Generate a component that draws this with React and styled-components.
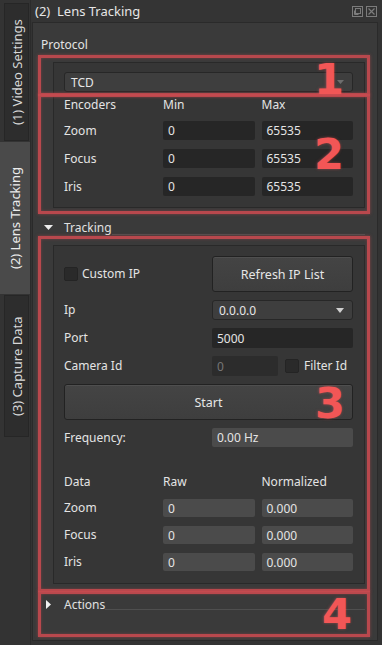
import React from 'react';
import styled, { createGlobalStyle } from 'styled-components';

const Global = createGlobalStyle`
  html, body { margin: 0; padding: 0; background: #333333; }
  body { font-family: "Noto Sans", "Open Sans", sans-serif; }
  * { box-sizing: border-box; }
`;

const Window = styled.div`
  display: flex;
  width: 382px;
  height: 645px;
  background: #333333;
  overflow: hidden;
  color: #e4e4e4;
  font-size: 12px;
`;

const TabBar = styled.div`
  flex: 0 0 30px;
  display: flex;
  flex-direction: column;
  padding-top: 3px;
  gap: 1px;
  border-right: 1px solid #2b2b2b;
`;

const Tab = styled.div`
  writing-mode: vertical-rl;
  transform: rotate(180deg);
  display: flex;
  align-items: center;
  justify-content: center;
  height: ${p => p.$h}px;
  width: ${p => (p.$active ? 30 : 25)}px;
  margin-left: ${p => (p.$active ? 0 : 4)}px;
  background: ${p => (p.$active ? '#4a4a4a' : '#2d2d2d')};
  border: 1px solid ${p => (p.$active ? '#4a4a4a' : '#262626')};
  color: ${p => (p.$active ? '#ececec' : '#d8d8d8')};
  font-size: 13px;
  white-space: nowrap;
`;

const Main = styled.div`
  flex: 1;
  display: flex;
  flex-direction: column;
  min-width: 0;
`;

const TitleBar = styled.div`
  height: 22px;
  flex: 0 0 22px;
  display: flex;
  align-items: center;
  padding: 0 5px 0 4px;
  background: #343434;
  font-size: 13px;
  color: #e6e6e6;
`;

const TitleText = styled.span`
  flex: 1;
  white-space: pre;
`;

const TitleIcons = styled.div`
  display: flex;
  gap: 3px;
`;

const Panel = styled.div`
  position: relative;
  flex: 1;
  margin: 0 4px 4px 1px;
  background: #3a3a3a;
  border: 1px solid #2a2a2a;
  padding: 14px 12px 0 8px;
  display: flex;
  flex-direction: column;
`;

const Label = styled.div`
  height: 16px;
  line-height: 16px;
  white-space: nowrap;
  color: #e4e4e4;
`;

const GroupBox = styled.div`
  margin: ${p => p.$mt || 0}px 0 0 12px;
  background: #363636;
  border: 1px solid #292929;
  padding: ${p => p.$pt}px 11px ${p => p.$pb}px 10px;
  display: flex;
  flex-direction: column;
  gap: ${p => p.$gap || 0}px;
`;

const Combo = styled.div`
  height: 20px;
  display: flex;
  align-items: center;
  padding: 0 8px 0 6px;
  background: #3e3e3e;
  border: 1px solid #272727;
  border-radius: 3px;
  color: #e6e6e6;
`;

const ComboText = styled.span`
  flex: 1;
`;

const Grid = styled.div`
  display: grid;
  grid-template-columns: 92px 1fr 1fr;
  grid-template-rows: ${p => p.$rows};
  column-gap: 7px;
  row-gap: 9px;
  align-items: center;
  margin-top: ${p => p.$mt || 0}px;
`;

const Field = styled.div`
  height: 100%;
  display: flex;
  align-items: center;
  padding-left: 5px;
  border-radius: 2px;
  background: ${p => (p.$ro ? '#4b4b4b' : p.$disabled ? '#2c2c2c' : '#262626')};
  color: ${p => (p.$disabled ? '#767676' : '#e4e4e4')};
  width: ${p => (p.$w ? `${p.$w}px` : 'auto')};
  flex: ${p => (p.$w ? '0 0 auto' : '1')};
`;

const Row = styled.div`
  display: grid;
  grid-template-columns: 1fr 141px;
  column-gap: 7px;
  align-items: center;
  height: ${p => p.$h}px;
`;

const Inline = styled.div`
  display: flex;
  align-items: center;
  height: 100%;
`;

const Check = styled.span`
  width: 14px;
  height: 14px;
  flex: 0 0 14px;
  background: #2a2a2a;
  border: 1px solid #242424;
  border-radius: 2px;
  margin-right: ${p => p.$mr}px;
  margin-left: ${p => p.$ml || 0}px;
`;

const Button = styled.div`
  height: 36px;
  display: flex;
  align-items: center;
  justify-content: center;
  background: linear-gradient(#444444, #3e3e3e);
  border: 1px solid #222222;
  border-radius: 3px;
  box-shadow: inset 0 1px 0 rgba(255, 255, 255, 0.06);
  color: #e6e6e6;
  font-size: 12.5px;
`;

const CollapseHeader = styled.div`
  display: flex;
  align-items: center;
  height: 16px;
  margin-top: ${p => p.$mt}px;
`;

const ArrowBox = styled.span`
  width: 23px;
  padding-left: ${p => p.$pl}px;
  display: flex;
  align-items: center;
`;

const HeaderText = styled.span`
  color: #e0e0e0;
  white-space: nowrap;
`;

const HeaderLine = styled.span`
  flex: 1;
  align-self: flex-end;
  height: 1px;
  margin-bottom: ${p => p.$mb}px;
  background: #4f4f4f;
`;

const Annot = styled.div`
  position: absolute;
  left: 5px;
  width: 332px;
  top: ${p => p.$top}px;
  height: ${p => p.$h}px;
  border: 3px solid rgba(198, 74, 80, 0.9);
  box-shadow: 0 0 3px rgba(198, 74, 80, 0.55), inset 0 0 3px rgba(198, 74, 80, 0.45);
  pointer-events: none;
`;

const Num = styled.div`
  position: absolute;
  left: ${p => p.$x}px;
  top: ${p => p.$y}px;
  font-family: "DejaVu Sans", sans-serif;
  font-weight: bold;
  font-size: 43px;
  line-height: 43px;
  color: #f25656;
  text-shadow: 0 0 3px rgba(242, 86, 86, 0.5);
  pointer-events: none;
`;

const FloatIcon = () => (
  <svg width="11" height="11" viewBox="0 0 11 11">
    <rect x="0.5" y="0.5" width="10" height="10" fill="none" stroke="#7c7c7c" />
    <rect x="3.5" y="2.5" width="5" height="5" fill="none" stroke="#7c7c7c" />
    <path d="M2.5 4.5V8.5H6.5" fill="none" stroke="#7c7c7c" />
  </svg>
);

const CloseIcon = () => (
  <svg width="11" height="11" viewBox="0 0 11 11">
    <rect x="0.5" y="0.5" width="10" height="10" fill="none" stroke="#7c7c7c" />
    <path d="M2.5 2.5L8.5 8.5M8.5 2.5L2.5 8.5" stroke="#7c7c7c" strokeWidth="1.2" />
  </svg>
);

const DownArrow = ({ color = '#eeeeee', w = 9, h = 5 }) => (
  <svg width={w} height={h} viewBox={`0 0 ${w} ${h}`}>
    <path d={`M0 0H${w}L${w / 2} ${h}Z`} fill={color} />
  </svg>
);

const RightArrow = () => (
  <svg width="5" height="9" viewBox="0 0 5 9">
    <path d="M0 0V9L5 4.5Z" fill="#f0f0f0" />
  </svg>
);

export default function App() {
  return (
    <>
      <Global />
      <Window>
        <TabBar>
          <Tab $h={138}>(1) Video Settings</Tab>
          <Tab $h={152} $active>(2) Lens Tracking</Tab>
          <Tab $h={142}>(3) Capture Data</Tab>
        </TabBar>
        <Main>
          <TitleBar>
            <TitleText>{'(2)  Lens Tracking'}</TitleText>
            <TitleIcons>
              <FloatIcon />
              <CloseIcon />
            </TitleIcons>
          </TitleBar>
          <Panel>
            <Label>Protocol</Label>
            <GroupBox $mt={9} $pt={9} $pb={11}>
              <Combo>
                <ComboText>TCD</ComboText>
                <DownArrow color="#6e6e6e" w={7} h={4} />
              </Combo>
              <Grid $mt={6} $rows="14px 19px 19px 19px">
                <Label>Encoders</Label>
                <Label>Min</Label>
                <Label>Max</Label>
                <Label>Zoom</Label>
                <Field>0</Field>
                <Field>65535</Field>
                <Label>Focus</Label>
                <Field>0</Field>
                <Field>65535</Field>
                <Label>Iris</Label>
                <Field>0</Field>
                <Field>65535</Field>
              </Grid>
            </GroupBox>

            <CollapseHeader $mt={11}>
              <ArrowBox $pl={3}>
                <DownArrow />
              </ArrowBox>
              <HeaderText>Tracking</HeaderText>
              <HeaderLine $mb={0} />
            </CollapseHeader>
            <GroupBox $mt={10} $pt={10} $pb={12} $gap={8}>
              <Row $h={36}>
                <Inline>
                  <Check $mr={4} />
                  <Label>Custom IP</Label>
                </Inline>
                <Button>Refresh IP List</Button>
              </Row>
              <Row $h={20}>
                <Label>Ip</Label>
                <Combo>
                  <ComboText>0.0.0.0</ComboText>
                  <DownArrow color="#d0d0d0" w={8} h={5} />
                </Combo>
              </Row>
              <Row $h={20}>
                <Label>Port</Label>
                <Field>5000</Field>
              </Row>
              <Row $h={20}>
                <Label>Camera Id</Label>
                <Inline>
                  <Field $w={66} $disabled>0</Field>
                  <Check $ml={7} $mr={5} />
                  <Label>Filter Id</Label>
                </Inline>
              </Row>
              <Button>Start</Button>
              <Row $h={19}>
                <Label>Frequency:</Label>
                <Field $ro>0.00 Hz</Field>
              </Row>
              <Grid $mt={19} $rows="16px 18px 18px 18px">
                <Label>Data</Label>
                <Label>Raw</Label>
                <Label>Normalized</Label>
                <Label>Zoom</Label>
                <Field $ro>0</Field>
                <Field $ro>0.000</Field>
                <Label>Focus</Label>
                <Field $ro>0</Field>
                <Field $ro>0.000</Field>
                <Label>Iris</Label>
                <Field $ro>0</Field>
                <Field $ro>0.000</Field>
              </Grid>
            </GroupBox>

            <CollapseHeader $mt={12}>
              <ArrowBox $pl={5}>
                <RightArrow />
              </ArrowBox>
              <HeaderText>Actions</HeaderText>
              <HeaderLine $mb={2} />
            </CollapseHeader>

            <Annot $top={32} $h={41} />
            <Annot $top={71} $h={120} />
            <Annot $top={213} $h={356} />
            <Annot $top={568} $h={46} />
            <Num $x={281} $y={35}>1</Num>
            <Num $x={281} $y={110}>2</Num>
            <Num $x={282} $y={359}>3</Num>
            <Num $x={289} $y={570}>4</Num>
          </Panel>
        </Main>
      </Window>
    </>
  );
}
